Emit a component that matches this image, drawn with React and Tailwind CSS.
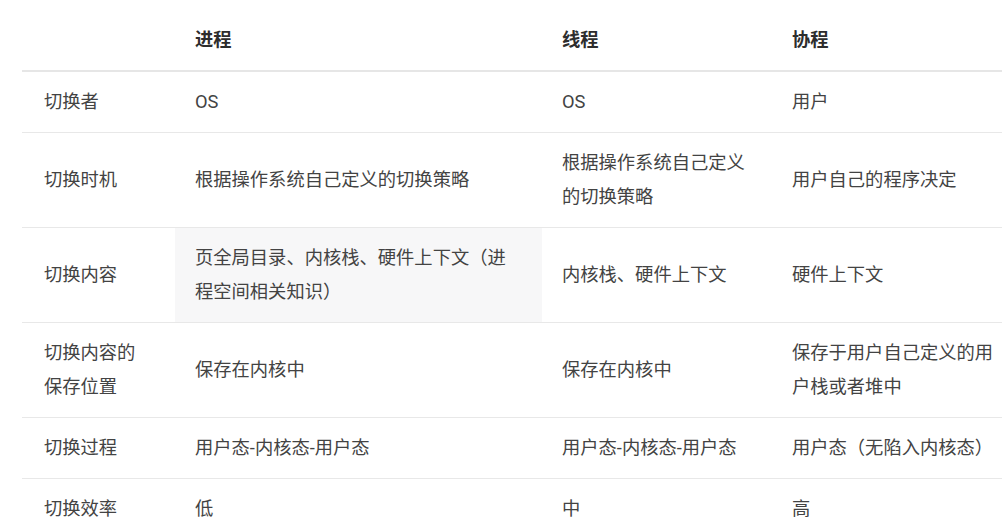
import React from "react";

const rows = [
  { label: "切换者", cells: ["OS", "OS", "用户"] },
  {
    label: "切换时机",
    cells: ["根据操作系统自己定义的切换策略", "根据操作系统自己定义的切换策略", "用户自己的程序决定"],
  },
  {
    label: "切换内容",
    cells: ["页全局目录、内核栈、硬件上下文（进程空间相关知识）", "内核栈、硬件上下文", "硬件上下文"],
    hover: true,
  },
  {
    label: "切换内容的保存位置",
    cells: ["保存在内核中", "保存在内核中", "保存于用户自己定义的用户栈或者堆中"],
  },
  {
    label: "切换过程",
    cells: ["用户态-内核态-用户态", "用户态-内核态-用户态", "用户态（无陷入内核态）"],
  },
  { label: "切换效率", cells: ["低", "中", "高"] },
];

const widths = ["w-[100px]", "w-[325px]", "w-[192px]", "w-[208px]"];

export default function App() {
  return (
    <div className="h-[526px] w-[1002px] overflow-hidden bg-white pt-[10px] pl-[22px] font-['Roboto','Noto_Sans_CJK_SC',sans-serif] text-[18.3px] leading-[34px] text-[#434343]">
      <table className="w-[980px] table-fixed border-collapse">
        <colgroup>
          <col className="w-[153px]" />
          <col className="w-[367px]" />
          <col className="w-[230px]" />
          <col className="w-[230px]" />
        </colgroup>
        <thead>
          <tr className="border-b-2 border-[#e6e6e6]">
            <th className="py-[13px] pl-[22px]"></th>
            {["进程", "线程", "协程"].map((h) => (
              <th key={h} className="py-[13px] pl-5 text-left font-semibold text-[#2d2d2d]">
                {h}
              </th>
            ))}
          </tr>
        </thead>
        <tbody>
          {rows.map((row) => (
            <tr key={row.label} className="border-b border-[#e8e8e8]">
              <td className="py-[13px] pl-[22px] align-middle">
                <div className={widths[0]}>{row.label}</div>
              </td>
              {row.cells.map((c, i) => (
                <td
                  key={i}
                  className={
                    "py-[13px] pl-5 align-middle " +
                    (row.hover && i === 0 ? "bg-[#f7f7f8]" : "")
                  }
                >
                  <div className={widths[i + 1] + " break-all"}>{c}</div>
                </td>
              ))}
            </tr>
          ))}
        </tbody>
      </table>
    </div>
  );
}
